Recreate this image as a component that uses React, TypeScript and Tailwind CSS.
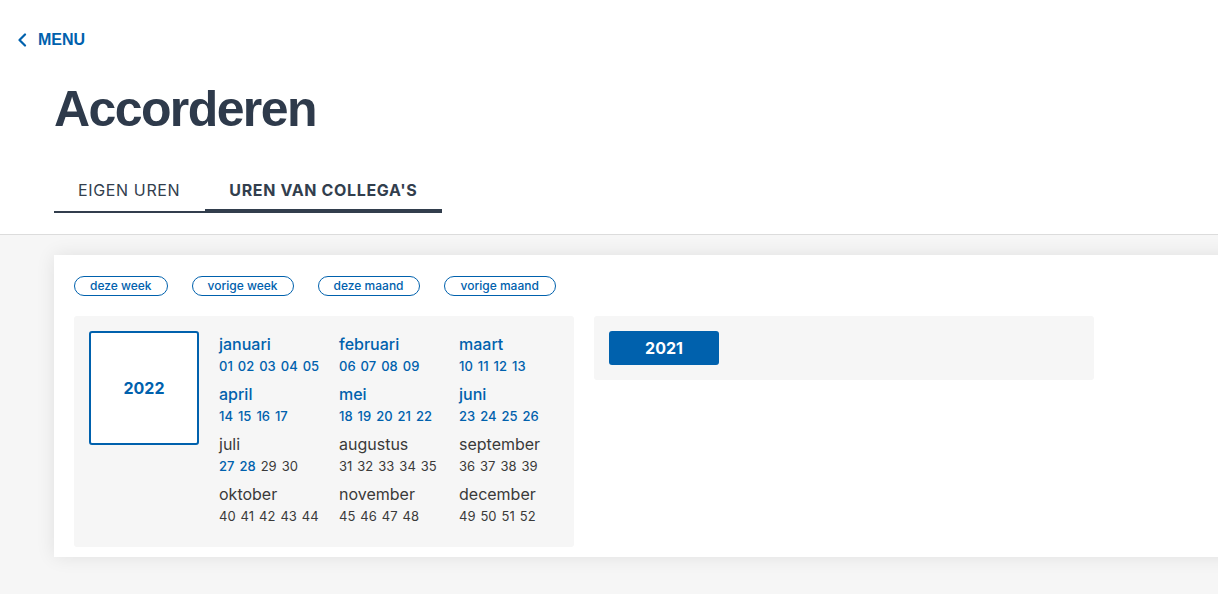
import React from "react";

const BLUE = "text-[#0061ad]";

type Month = { name: string; weeks: string[]; active: number };

const months: Month[] = [
  { name: "januari", weeks: ["01", "02", "03", "04", "05"], active: 5 },
  { name: "februari", weeks: ["06", "07", "08", "09"], active: 4 },
  { name: "maart", weeks: ["10", "11", "12", "13"], active: 4 },
  { name: "april", weeks: ["14", "15", "16", "17"], active: 4 },
  { name: "mei", weeks: ["18", "19", "20", "21", "22"], active: 5 },
  { name: "juni", weeks: ["23", "24", "25", "26"], active: 4 },
  { name: "juli", weeks: ["27", "28", "29", "30"], active: 2 },
  { name: "augustus", weeks: ["31", "32", "33", "34", "35"], active: 0 },
  { name: "september", weeks: ["36", "37", "38", "39"], active: 0 },
  { name: "oktober", weeks: ["40", "41", "42", "43", "44"], active: 0 },
  { name: "november", weeks: ["45", "46", "47", "48"], active: 0 },
  { name: "december", weeks: ["49", "50", "51", "52"], active: 0 },
];

const pills = ["deze week", "vorige week", "deze maand", "vorige maand"];

export default function App() {
  return (
    <div className="w-[1218px] min-h-[594px] overflow-hidden bg-[#f6f6f6] font-['Inter',sans-serif]">
      {/* Header */}
      <div className="bg-white border-b border-[#dcdcdc] pt-[30px] pb-[21px]">
        <a className="flex items-center pl-[17px] text-[#0061ad] font-['Liberation_Sans',Arial,sans-serif] font-bold text-[16px] leading-[20px]">
          <svg width="12" height="14" viewBox="0 0 12 14" className="mr-[9px]">
            <path d="M8 1.5 L2.5 7 L8 12.5" fill="none" stroke="#0061ad" strokeWidth="2.2" strokeLinecap="round" strokeLinejoin="round" />
          </svg>
          MENU
        </a>
        <h1 className="ml-[54px] mt-[29px] text-[50px] leading-[60px] font-bold tracking-[-1.6px] text-[#2e3a4b] font-['Liberation_Sans',Arial,sans-serif]">
          Accorderen
        </h1>
        <div className="ml-[54px] mt-[39px] flex items-end">
          <div className="pl-[24px] pr-[25px] pb-[9px] border-b-2 border-[#323e4d] text-[16px] leading-[24px] tracking-[0.04em] text-[#323e4d]">
            EIGEN UREN
          </div>
          <div className="pl-[24px] pr-[25px] pb-[7px] border-b-4 border-[#323e4d] text-[16px] leading-[24px] tracking-[0.04em] font-bold text-[#323e4d]">
            UREN VAN COLLEGA'S
          </div>
        </div>
      </div>

      {/* Content */}
      <div className="pt-[20px] pb-[37px] pl-[54px]">
        <div className="w-[1200px] bg-white shadow-[0_0_18px_rgba(0,0,0,0.09)] pt-[21px] pb-[10px] px-[20px]">
          <div className="flex gap-[24px]">
            {pills.map((p, i) => (
              <button
                key={p}
                className={`h-[20px] ${i === 3 ? "px-[16px]" : "px-[15px]"} rounded-full border border-[#0061ad] text-[#0061ad] text-[12px] leading-[18px] font-medium bg-white`}
              >
                {p}
              </button>
            ))}
          </div>
          <div className="flex items-start gap-[20px] mt-[20px]">
            <div className="w-[500px] bg-[#f6f6f6] rounded-[3px] pt-[15px] px-[15px] pb-[16px] flex">
              <div className="w-[110px] h-[114px] shrink-0 border-2 border-[#0061ad] rounded-[3px] bg-white flex items-center justify-center text-[#0061ad] font-bold text-[16px]">
                2022
              </div>
              <div className="ml-[20px] grid grid-cols-[120px_120px_120px]">
                {months.map((m, i) => (
                  <div key={m.name} className="h-[50px] pt-[1px]">
                    <div className={`text-[16px] leading-[24px] ${i < 6 ? BLUE + " font-medium" : "text-[#3a3a3a]"}`}>{m.name}</div>
                    <div className="flex gap-[5px] text-[13px] leading-[20px]">
                      {m.weeks.map((w, j) => (
                        <span key={w} className={j < m.active ? BLUE + " font-medium" : "text-[#3a3a3a]"}>
                          {w}
                        </span>
                      ))}
                    </div>
                  </div>
                ))}
              </div>
            </div>
            <div className="w-[500px] bg-[#f6f6f6] rounded-[3px] p-[15px]">
              <button className="w-[110px] h-[34px] bg-[#0061ad] rounded-[3px] text-white font-bold text-[16px]">
                2021
              </button>
            </div>
          </div>
        </div>
      </div>
    </div>
  );
}
